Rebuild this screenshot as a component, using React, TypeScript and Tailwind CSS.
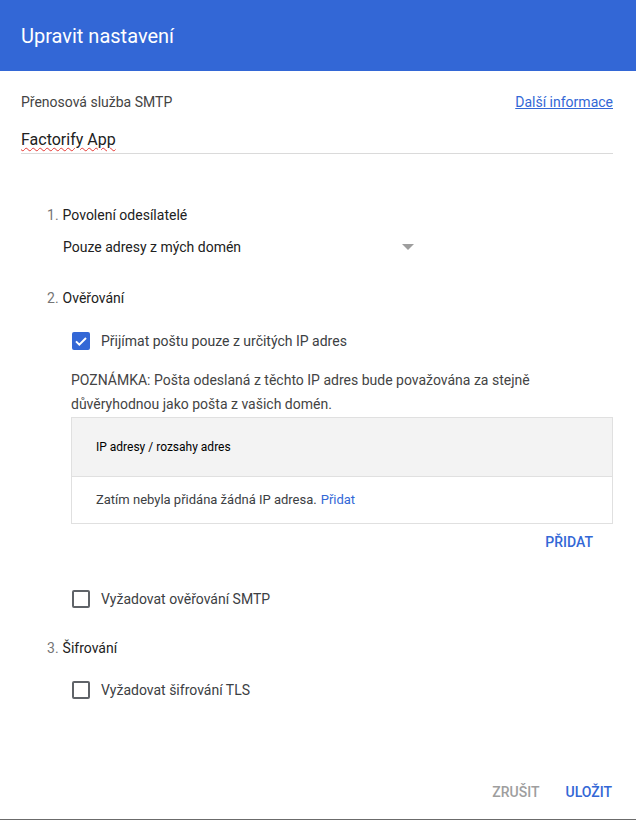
import React from 'react';

const font = { fontFamily: 'Roboto, "Noto Sans", Arial, sans-serif' };

const CheckBox: React.FC<{ checked?: boolean }> = ({ checked }) =>
  checked ? (
    <span className="flex h-[18px] w-[18px] items-center justify-center rounded-[2px] bg-[#3367d6]">
      <svg viewBox="0 0 24 24" className="h-[16px] w-[16px]" fill="none" stroke="white" strokeWidth="3">
        <path d="M4.5 12.5l5 5 10-10" />
      </svg>
    </span>
  ) : (
    <span className="block h-[18px] w-[18px] rounded-[2px] border-2 border-[#5f6368]" />
  );

const Step: React.FC<{ n: number; label: string }> = ({ n, label }) => (
  <div className="flex h-5 items-center pl-[47px] text-[14px] text-[#212121]">
    <span className="text-[#757575]">{n}.</span>
    <span className="ml-1">{label}</span>
  </div>
);

const CheckRow: React.FC<{ checked?: boolean; label: string }> = ({ checked, label }) => (
  <div className="flex h-5 items-center pl-[72px]">
    <CheckBox checked={checked} />
    <span className="ml-[11px] text-[14px] text-[#3c4043]">{label}</span>
  </div>
);

export default function App() {
  return (
    <div className="flex h-[820px] w-[636px] flex-col bg-white" style={font}>
      <div className="flex h-[71px] shrink-0 items-center bg-[#3367d6] pl-[21px]">
        <h1 className="text-[20px] font-normal text-white">Upravit nastavení</h1>
      </div>

      <div className="mt-[21px] flex h-5 items-center justify-between pl-[21px] pr-[23px] text-[14px]">
        <span className="text-[#444]">Přenosová služba SMTP</span>
        <a className="text-[#3367d6] underline">Další informace</a>
      </div>

      <div className="ml-[21px] mr-[23px] mt-[15px] flex h-[27px] items-center border-b border-[#dadada]">
        <span className="text-[16px] text-[#212121] underline decoration-wavy decoration-[#e53935] decoration-1 underline-offset-2">
          Factorify App
        </span>
      </div>

      <div className="mt-[51px]">
        <Step n={1} label="Povolení odesílatelé" />
      </div>
      <div className="mt-[12px] flex h-5 w-[414px] items-center justify-between pl-[63px]">
        <span className="text-[14px] text-[#212121]">Pouze adresy z mých domén</span>
        <span className="h-0 w-0 border-x-[6px] border-t-[6px] border-x-transparent border-t-[#9e9e9e]" />
      </div>

      <div className="mt-[31px]">
        <Step n={2} label="Ověřování" />
      </div>
      <div className="mt-[23px]">
        <CheckRow checked label="Přijímat poštu pouze z určitých IP adres" />
      </div>

      <p className="ml-[71px] mr-[24px] mt-[17px] text-[14px] leading-6 text-[#444]">
        POZNÁMKA: Pošta odeslaná z těchto IP adres bude považována za stejně důvěryhodnou jako pošta z vašich domén.
      </p>

      <div className="ml-[71px] mr-[23px] mt-[1px] border border-[#e0e0e0]">
        <div className="flex h-[58px] items-center bg-[#f3f3f3] pl-[24px] text-[12px] text-black">
          IP adresy / rozsahy adres
        </div>
        <div className="flex h-[47px] items-center border-t border-[#e0e0e0] pl-[24px] text-[13px] text-[#3c4043]">
          Zatím nebyla přidána žádná IP adresa.<span className="ml-1 text-[#3367d6]">Přidat</span>
        </div>
      </div>

      <div className="mt-[8px] flex h-5 justify-end pr-[43px]">
        <span className="text-[14px] font-medium text-[#3367d6]">PŘIDAT</span>
      </div>

      <div className="mt-[37px]">
        <CheckRow label="Vyžadovat ověřování SMTP" />
      </div>

      <div className="mt-[29px]">
        <Step n={3} label="Šifrování" />
      </div>
      <div className="mt-[22px]">
        <CheckRow label="Vyžadovat šifrování TLS" />
      </div>

      <div className="mt-auto flex h-5 items-center justify-end gap-[26px] pr-[24px] text-[14px] font-medium">
        <span className="text-[#9e9e9e]">ZRUŠIT</span>
        <span className="text-[#3367d6]">ULOŽIT</span>
      </div>
      <div className="h-[18px] shrink-0 border-b border-[#6b6b6b]" />
    </div>
  );
}
